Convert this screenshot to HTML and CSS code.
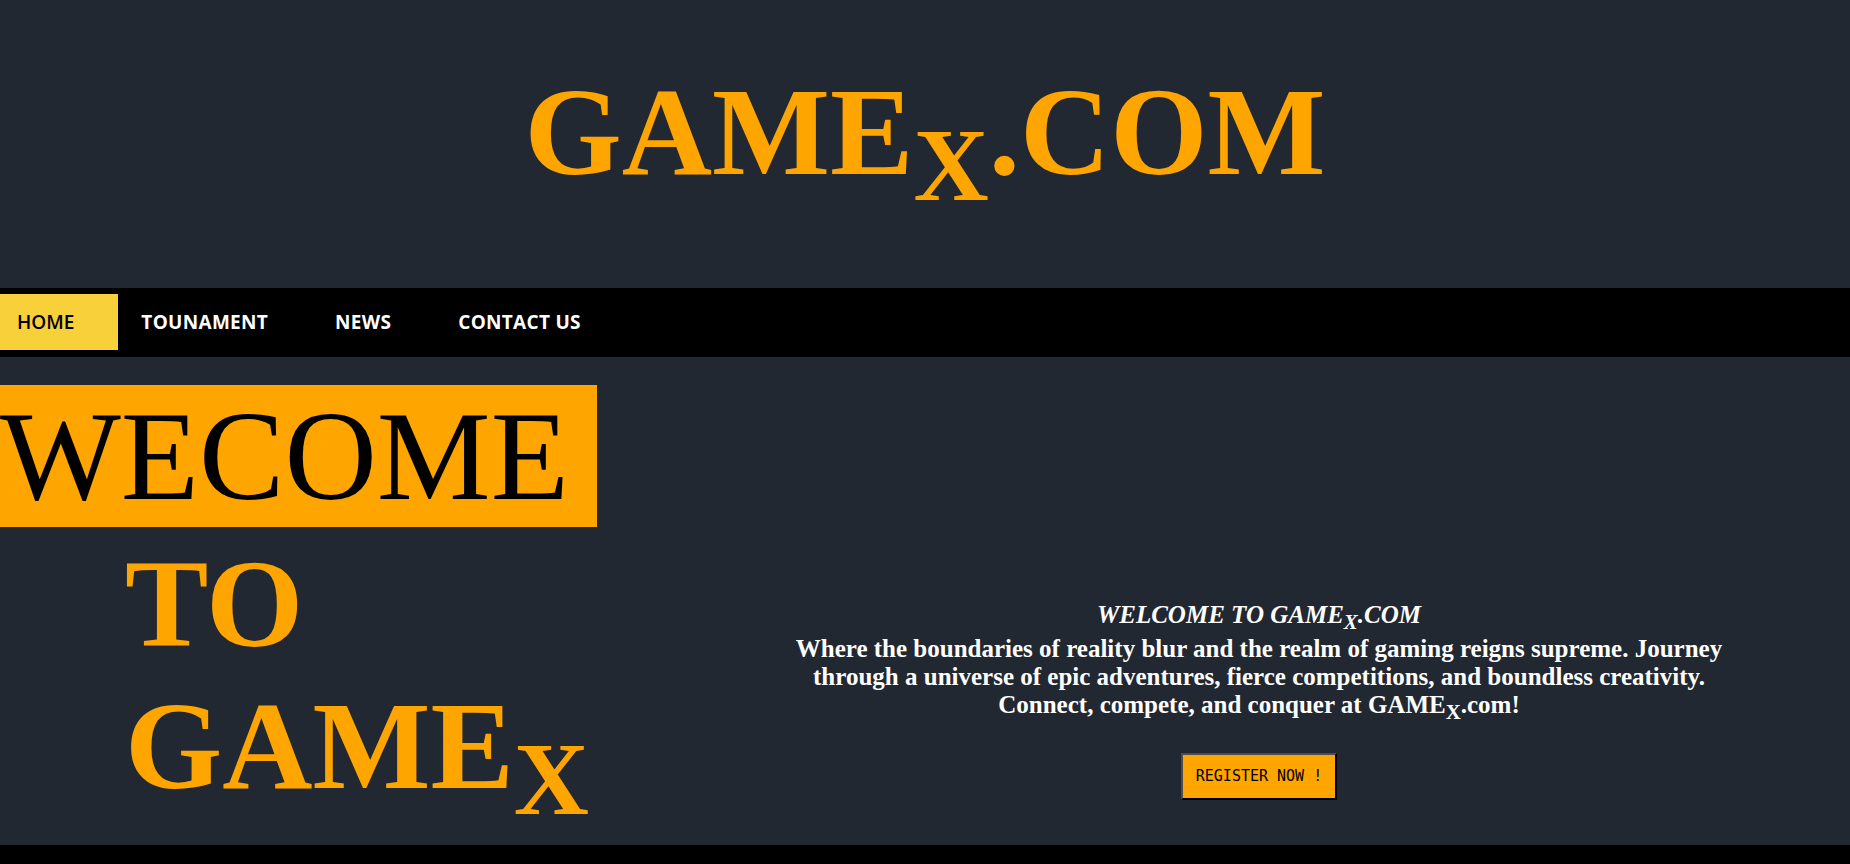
FILE: index.html
```html
<!DOCTYPE html>
<html lang="en">
<head>
<meta charset="utf-8">
<title>GAMEx.COM</title>
<link rel="stylesheet" href="styles.css">
</head>
<body>
<header class="site-header">
  <h1 class="logo">GAME<sub class="logo-sub">X</sub>.COM</h1>
</header>
<nav class="main-nav">
  <a class="nav-link active" href="#">HOME</a>
  <a class="nav-link" href="#">TOUNAMENT</a>
  <a class="nav-link" href="#">NEWS</a>
  <a class="nav-link" href="#">CONTACT US</a>
</nav>
<main class="hero">
  <div class="hero-left">
    <h1 class="welcome"><span class="welcome-box">WECOME</span></h1>
    <h1 class="to-game">TO<br>GAME<sub class="big-sub">X</sub></h1>
  </div>
  <div class="hero-right">
    <h2 class="intro-title">WELCOME TO GAME<sub>X</sub>.COM</h2>
    <p class="intro-text">Where the boundaries of reality blur and the realm of gaming reigns supreme. Journey through a universe of epic adventures, fierce competitions, and boundless creativity. Connect, compete, and conquer at GAME<sub>X</sub>.com!</p>
    <button class="register-btn" type="button">REGISTER NOW !</button>
  </div>
</main>
<footer class="site-footer"></footer>
</body>
</html>
```
FILE: styles.css
```css
html, body {
  margin: 0;
  padding: 0;
}
body {
  background: #222831;
  font-family: "Liberation Serif", "Times New Roman", serif;
  overflow: hidden;
}
.site-header {
  box-sizing: border-box;
  height: 288px;
  padding-top: 70px;
  text-align: center;
}
.logo {
  margin: 0;
  font-size: 125px;
  line-height: 125px;
  font-weight: 700;
  color: #ffa500;
}
.logo-sub {
  line-height: 0;
}
.main-nav {
  box-sizing: border-box;
  height: 69px;
  padding: 6px 0 7px;
  background: #000;
  display: flex;
  gap: 6px;
}
.nav-link {
  display: flex;
  align-items: center;
  padding: 0 44px 0 17px;
  font-family: "Open Sans", "Noto Sans", sans-serif;
  font-size: 19px;
  font-weight: 700;
  letter-spacing: 0.3px;
  color: #fff;
  text-decoration: none;
}
.nav-link.active {
  background: #f8d03a;
  color: #000;
  font-weight: 600;
  letter-spacing: 0;
}
.hero {
  box-sizing: border-box;
  height: 488px;
  padding-top: 28px;
  display: flex;
}
.hero-left {
  flex: none;
  width: 789px;
}
.welcome {
  margin: 0;
  font-size: 128px;
  line-height: 142px;
  font-weight: 400;
  color: #000;
}
.welcome-box {
  padding-right: 28px;
  background: #ffa500;
}
.to-game {
  margin: 6px 0 0;
  padding-left: 125px;
  font-size: 125px;
  line-height: 142px;
  font-weight: 700;
  color: #ffa500;
}
.big-sub {
  line-height: 0;
}
.hero-right {
  flex: none;
  width: 940px;
  padding-top: 216px;
  text-align: center;
  color: #fff;
}
.intro-title {
  margin: 0;
  font-size: 25px;
  font-style: italic;
  font-weight: 700;
}
.intro-text {
  margin: 0;
  font-size: 25px;
  font-weight: 700;
}
.register-btn {
  margin-top: 28px;
  padding: 13px 13px;
  background: #ffa500;
  border-style: solid;
  border-width: 2px;
  border-color: #4d4d4d #000 #000 #4d4d4d;
  font-family: "DejaVu Sans Mono", monospace;
  font-size: 15px;
  line-height: 17px;
  color: #000;
  cursor: pointer;
}
.site-footer {
  height: 19px;
  background: #000;
}
```
